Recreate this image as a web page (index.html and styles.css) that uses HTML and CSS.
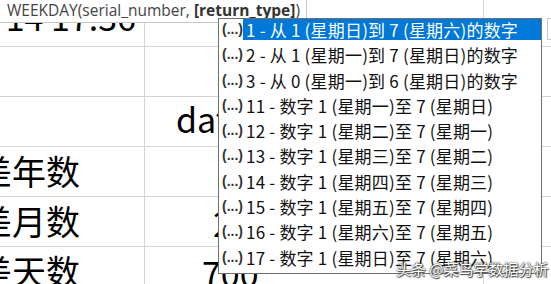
FILE: index.html
```html
<!DOCTYPE html>
<html lang="zh-CN">
<head>
    <meta charset="UTF-8">
    <meta name="viewport" content="width=device-width, initial-scale=1.0">
    <title>WEEKDAY</title>
    <link rel="stylesheet" href="styles.css">
</head>
<body>
    <!-- Bảng tính phía sau -->
    <div class="sheet">
        <div class="cell col-a row-top num">14 17:36</div>
        <div class="cell col-b row-top"></div>
        <div class="cell col-c row-top"></div>

        <div class="cell col-a"></div>
        <div class="cell col-b"></div>
        <div class="cell col-c"></div>

        <div class="cell col-a"></div>
        <div class="cell col-b head">date</div>
        <div class="cell col-c"></div>

        <div class="cell col-a label">相差年数</div>
        <div class="cell col-b"></div>
        <div class="cell col-c"></div>

        <div class="cell col-a label">相差月数</div>
        <div class="cell col-b val-month">24</div>
        <div class="cell col-c"></div>

        <div class="cell col-a label">相差天数</div>
        <div class="cell col-b val-day">700</div>
        <div class="cell col-c"></div>
    </div>

    <!-- Tooltip cú pháp hàm -->
    <div class="syntax-tip">WEEKDAY(serial_number, <b>[return_type]</b>)</div>

    <!-- Danh sách gợi ý -->
    <ul class="suggest">
        <li class="active"><span class="dots">(...)</span><span class="opt">1 - 从 1 (星期日)到 7 (星期六)的数字</span></li>
        <li><span class="dots">(...)</span><span class="opt">2 - 从 1 (星期一)到 7 (星期日)的数字</span></li>
        <li><span class="dots">(...)</span><span class="opt">3 - 从 0 (星期一)到 6 (星期日)的数字</span></li>
        <li><span class="dots">(...)</span><span class="opt">11 - 数字 1 (星期一)至 7 (星期日)</span></li>
        <li><span class="dots">(...)</span><span class="opt">12 - 数字 1 (星期二)至 7 (星期一)</span></li>
        <li><span class="dots">(...)</span><span class="opt">13 - 数字 1 (星期三)至 7 (星期二)</span></li>
        <li><span class="dots">(...)</span><span class="opt">14 - 数字 1 (星期四)至 7 (星期三)</span></li>
        <li><span class="dots">(...)</span><span class="opt">15 - 数字 1 (星期五)至 7 (星期四)</span></li>
        <li><span class="dots">(...)</span><span class="opt">16 - 数字 1 (星期六)至 7 (星期五)</span></li>
        <li><span class="dots">(...)</span><span class="opt">17 - 数字 1 (星期日)至 7 (星期六)</span></li>
    </ul>
    <div class="side-box"></div>

    <div class="watermark">头条 @菜鸟学数据分析</div>
</body>
</html>
```

FILE: styles.css
```css
* {
    margin: 0;
    padding: 0;
    box-sizing: border-box;
}

body {
    width: 551px;
    height: 284px;
    overflow: hidden;
    position: relative;
    background: #fff;
    font-family: "Noto Sans CJK SC", sans-serif;
}

/* Lưới ô */
.sheet {
    display: grid;
    grid-template-columns: 145px 339px 100px;
    grid-template-rows: 47px 50px 50px 50px 50px 50px;
    font-size: 34px;
    color: #000;
}

.cell {
    border-right: 1px solid #d4d4d4;
    border-bottom: 1px solid #d4d4d4;
    display: flex;
    align-items: flex-end;
    white-space: nowrap;
    overflow: hidden;
    line-height: 1;
    padding-bottom: 6px;
}

.num {
    justify-content: flex-end;
    padding-right: 8px;
    padding-bottom: 12px;
}

.label {
    margin-left: -56px;
    padding-bottom: 8px;
}

.head {
    padding-left: 31px;
    padding-bottom: 10px;
}

.val-month {
    padding-left: 68px;
}

.val-day {
    padding-left: 57px;
}

/* Tooltip */
.syntax-tip {
    position: absolute;
    top: 0;
    left: 0;
    width: 307px;
    height: 23px;
    background: #fff;
    border: 1px solid #c6c6c6;
    border-top: none;
    border-left: none;
    padding-left: 7px;
    font-family: "Open Sans", sans-serif;
    font-size: 15.5px;
    line-height: 21px;
    color: #444;
    white-space: nowrap;
}

.syntax-tip b {
    font-weight: bold;
    color: #333;
}

/* Danh sách gợi ý */
.suggest {
    position: absolute;
    top: 18px;
    left: 218px;
    width: 324px;
    height: 256px;
    list-style: none;
    background: #fff;
    border: 1px solid #6f6f6f;
    font-size: 17px;
    color: #111;
}

.suggest li {
    height: 25.3px;
    display: flex;
    align-items: flex-start;
    white-space: nowrap;
}

.dots {
    padding-left: 3px;
    font-family: "Liberation Sans", sans-serif;
    font-weight: bold;
    font-size: 14px;
    line-height: 21px;
    color: #333;
}

.opt {
    line-height: 21px;
    padding-left: 3px;
    letter-spacing: 0.2px;
}

.suggest li.active .opt {
    flex: 1;
    background: #0078d7;
    color: #fff;
}

.side-box {
    position: absolute;
    top: 18px;
    left: 547px;
    width: 10px;
    height: 22px;
    border: 1px solid #c8c8c8;
    background: #fff;
}

.watermark {
    position: absolute;
    left: 396px;
    top: 258px;
    font-size: 15px;
    color: #fff;
    text-shadow: 0 0 1px #333, 0 0 2px #333, 1px 1px 1px #555;
    white-space: nowrap;
}
```
